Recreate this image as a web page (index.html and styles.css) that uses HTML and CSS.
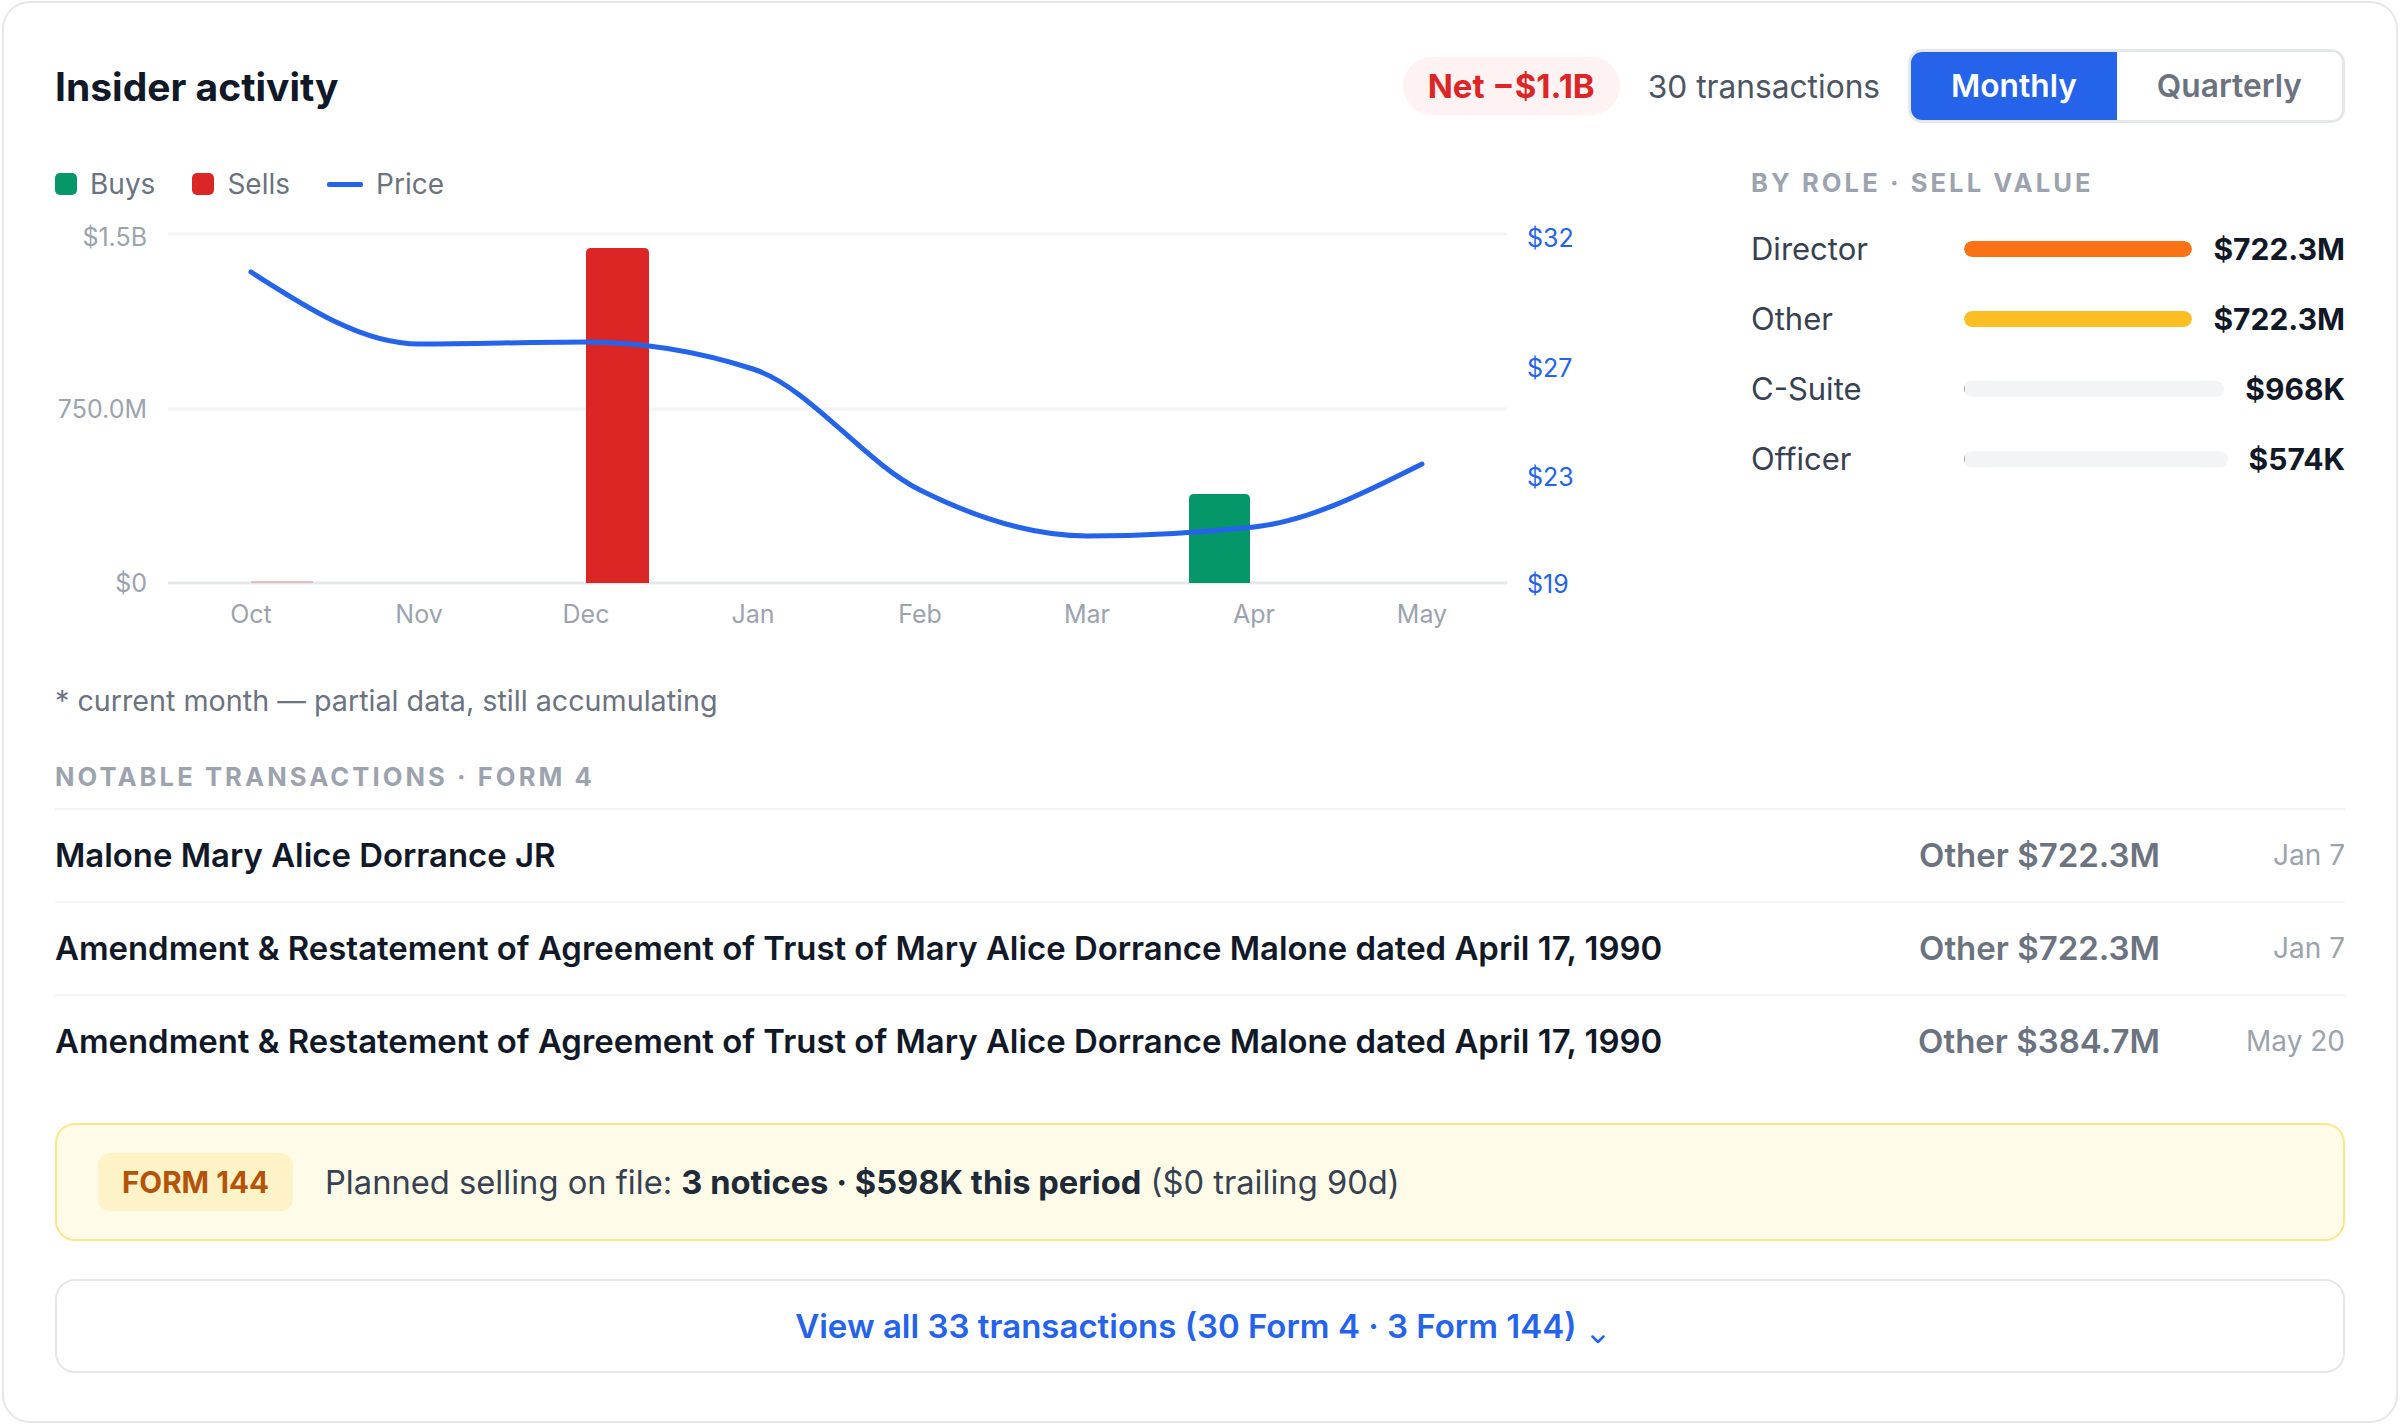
FILE: index.html
```html
<!DOCTYPE html>
<html lang="en">

<head>
    <meta charset="UTF-8" />
    <meta name="viewport" content="width=device-width, initial-scale=1.0" />
    <title>Insider activity</title>
    <link rel="stylesheet" href="styles.css">
</head>

<body>
    <main class="card">
        <header class="card-head">
            <h1>Insider activity</h1>
            <div class="head-meta">
                <span class="net-pill">Net −$1.1B</span>
                <span class="tx-count">30 transactions</span>
                <div class="toggle">
                    <button class="active">Monthly</button>
                    <button>Quarterly</button>
                </div>
            </div>
        </header>

        <section class="overview">
            <div class="chart-col">
                <ul class="legend">
                    <li><span class="swatch buy"></span>Buys</li>
                    <li><span class="swatch sell"></span>Sells</li>
                    <li><span class="swatch price"></span>Price</li>
                </ul>
                <svg class="chart" width="1540" height="430" viewBox="0 0 1540 430">
                    <line class="grid" x1="113" y1="24" x2="1452" y2="24" />
                    <line class="grid" x1="113" y1="199" x2="1452" y2="199" />
                    <line class="grid base" x1="113" y1="373" x2="1452" y2="373" />

                    <text class="axis" x="92" y="27" dy="0.35em" text-anchor="end">$1.5B</text>
                    <text class="axis" x="92" y="199" dy="0.35em" text-anchor="end">750.0M</text>
                    <text class="axis" x="92" y="373" dy="0.35em" text-anchor="end">$0</text>

                    <text class="axis-price" x="1472" y="28" dy="0.35em">$32</text>
                    <text class="axis-price" x="1472" y="158" dy="0.35em">$27</text>
                    <text class="axis-price" x="1472" y="267" dy="0.35em">$23</text>
                    <text class="axis-price" x="1472" y="374" dy="0.35em">$19</text>

                    <!-- buys sit left of the month tick, sells right of it -->
                    <rect class="bar-sell faint" x="196" y="371" width="62" height="2" />
                    <path class="bar-sell" d="M531 373 V43 Q531 38 536 38 H589 Q594 38 594 43 V373 Z" />
                    <path class="bar-buy" d="M1134 373 V289 Q1134 284 1139 284 H1190 Q1195 284 1195 289 V373 Z" />

                    <path class="price-line"
                        d="M196 62 C252 98 308 134 364 134 C420 134 475 132 531 132 C587 132 642 141 698 159 C754 177 809 252 865 280 C921 308 976 326 1032 326 C1088 326 1143 323 1199 317 C1255 311 1311 282 1367 254" />

                    <text class="axis" x="196" y="404" dy="0.35em" text-anchor="middle">Oct</text>
                    <text class="axis" x="364" y="404" dy="0.35em" text-anchor="middle">Nov</text>
                    <text class="axis" x="531" y="404" dy="0.35em" text-anchor="middle">Dec</text>
                    <text class="axis" x="698" y="404" dy="0.35em" text-anchor="middle">Jan</text>
                    <text class="axis" x="865" y="404" dy="0.35em" text-anchor="middle">Feb</text>
                    <text class="axis" x="1032" y="404" dy="0.35em" text-anchor="middle">Mar</text>
                    <text class="axis" x="1199" y="404" dy="0.35em" text-anchor="middle">Apr</text>
                    <text class="axis" x="1367" y="404" dy="0.35em" text-anchor="middle">May</text>
                </svg>
                <p class="footnote">* current month — partial data, still accumulating</p>
            </div>

            <aside class="roles">
                <h3 class="eyebrow">By role · Sell value</h3>
                <ul class="role-list">
                    <li>
                        <span class="role-name">Director</span>
                        <span class="role-track"><span class="role-fill director" style="width: 100%"></span></span>
                        <span class="role-value">$722.3M</span>
                    </li>
                    <li>
                        <span class="role-name">Other</span>
                        <span class="role-track"><span class="role-fill other" style="width: 100%"></span></span>
                        <span class="role-value">$722.3M</span>
                    </li>
                    <li>
                        <span class="role-name">C-Suite</span>
                        <span class="role-track"><span class="role-fill" style="width: 0.13%"></span></span>
                        <span class="role-value">$968K</span>
                    </li>
                    <li>
                        <span class="role-name">Officer</span>
                        <span class="role-track"><span class="role-fill" style="width: 0.08%"></span></span>
                        <span class="role-value">$574K</span>
                    </li>
                </ul>
            </aside>
        </section>

        <section class="notable">
            <h3 class="eyebrow">Notable transactions · Form 4</h3>
            <ul class="tx-list">
                <li class="tx-row">
                    <span class="tx-name">Malone Mary Alice Dorrance JR</span>
                    <span class="tx-value">Other $722.3M</span>
                    <span class="tx-date">Jan 7</span>
                </li>
                <li class="tx-row">
                    <span class="tx-name">Amendment &amp; Restatement of Agreement of Trust of Mary Alice Dorrance Malone dated April 17, 1990</span>
                    <span class="tx-value">Other $722.3M</span>
                    <span class="tx-date">Jan 7</span>
                </li>
                <li class="tx-row">
                    <span class="tx-name">Amendment &amp; Restatement of Agreement of Trust of Mary Alice Dorrance Malone dated April 17, 1990</span>
                    <span class="tx-value">Other $384.7M</span>
                    <span class="tx-date">May 20</span>
                </li>
            </ul>
        </section>

        <div class="form144">
            <span class="form-badge">FORM 144</span>
            <p>Planned selling on file: <strong>3 notices · $598K this period</strong> ($0 trailing 90d)</p>
        </div>

        <button class="view-all">View all 33 transactions (30 Form 4 · 3 Form 144)
            <svg class="chevron" width="14" height="9" viewBox="0 0 14 9">
                <path d="M1.5 1.5 L7 7 L12.5 1.5" />
            </svg>
        </button>
    </main>
</body>

</html>
```

FILE: styles.css
```css
* {
    margin: 0;
    padding: 0;
    box-sizing: border-box;
}

body {
    font-family: "Inter", "Liberation Sans", sans-serif;
    background: #ffffff;
    color: #111827;
    padding: 1px 2px 2px;
}

ul {
    list-style: none;
}

.card {
    background-color: #ffffff;
    border: 2px solid #e5e7eb;
    border-radius: 28px;
    padding: 46px 51px 48px;
}

/* header */

.card-head {
    display: flex;
    justify-content: space-between;
    align-items: center;
}

h1 {
    font-size: 39px;
    font-weight: 700;
    color: #111827;
}

.head-meta {
    display: flex;
    align-items: center;
    gap: 28px;
}

.net-pill {
    background-color: #fef2f2;
    color: #dc2626;
    font-size: 33px;
    font-weight: 700;
    line-height: 58px;
    padding: 0 25px;
    border-radius: 29px;
}

.tx-count {
    font-size: 31.7px;
    color: #4b5563;
}

.toggle {
    display: flex;
    border: 3px solid #e5e7eb;
    border-radius: 14px;
    overflow: hidden;
}

.toggle button {
    font-family: inherit;
    font-size: 31.7px;
    font-weight: 600;
    line-height: 68px;
    padding: 0 40px;
    border: none;
    background-color: #ffffff;
    color: #6b7280;
    cursor: pointer;
}

.toggle button.active {
    background-color: #2563eb;
    color: #ffffff;
}

/* chart + roles */

.overview {
    display: grid;
    grid-template-columns: 1fr 594px;
    column-gap: 100px;
    margin-top: 43px;
}

.legend {
    display: flex;
    gap: 37px;
    font-size: 28px;
    line-height: 36px;
    color: #6b7280;
}

.legend li {
    display: flex;
    align-items: center;
    gap: 13px;
}

.swatch {
    display: inline-block;
    width: 22px;
    height: 22px;
    border-radius: 5px;
}

.swatch.buy {
    background-color: #059669;
}

.swatch.sell {
    background-color: #dc2626;
}

.swatch.price {
    width: 36px;
    height: 5px;
    border-radius: 2px;
    background-color: #2563eb;
}

.chart {
    display: block;
    margin-top: 8px;
}

.chart .grid {
    stroke: #f3f4f6;
    stroke-width: 3;
}

.chart .grid.base {
    stroke: #e5e7eb;
}

.chart .axis {
    font-size: 25px;
    fill: #9ca3af;
}

.chart .axis-price {
    font-size: 25px;
    fill: #2563eb;
}

.chart .bar-sell {
    fill: #dc2626;
}

.chart .bar-sell.faint {
    opacity: 0.25;
}

.chart .bar-buy {
    fill: #059669;
}

.chart .price-line {
    fill: none;
    stroke: #2563eb;
    stroke-width: 5;
    stroke-linecap: round;
}

.footnote {
    margin-top: 41px;
    font-size: 28.7px;
    line-height: 40px;
    color: #6b7280;
}

.eyebrow {
    font-size: 25.6px;
    font-weight: 700;
    line-height: 34px;
    letter-spacing: 0.12em;
    text-transform: uppercase;
    color: #9ca3af;
}

.role-list {
    display: flex;
    flex-direction: column;
    gap: 30px;
    margin-top: 29px;
}

.role-list li {
    display: grid;
    grid-template-columns: 192px 1fr auto;
    column-gap: 21px;
    align-items: center;
    line-height: 40px;
}

.role-name {
    font-size: 31px;
    color: #374151;
}

.role-track {
    display: block;
    height: 16px;
    border-radius: 8px;
    background-color: #f3f4f6;
    overflow: hidden;
}

.role-fill {
    display: block;
    height: 100%;
    border-radius: 8px;
    background-color: #9ca3af;
}

.role-fill.director {
    background-color: #f97316;
}

.role-fill.other {
    background-color: #fbbf24;
}

.role-value {
    font-size: 30px;
    font-weight: 700;
    color: #111827;
}

/* notable transactions */

.notable {
    margin-top: 39px;
}

.tx-list {
    margin-top: 14px;
}

.tx-row {
    display: flex;
    align-items: center;
    border-top: 2px solid #f3f4f6;
    padding: 25px 0;
    line-height: 41px;
}

.tx-name {
    flex: 1;
    font-size: 32.9px;
    font-weight: 600;
    color: #111827;
}

.tx-value {
    font-size: 33px;
    font-weight: 600;
    color: #6b7280;
}

.tx-date {
    min-width: 140px;
    margin-left: 45px;
    text-align: right;
    font-size: 28px;
    color: #9ca3af;
}

/* form 144 + footer button */

.form144 {
    display: flex;
    align-items: center;
    gap: 32px;
    margin-top: 36px;
    padding: 28px 41px;
    background-color: #fefce8;
    border: 2px solid #fde68a;
    border-radius: 20px;
    font-size: 32.7px;
    color: #374151;
}

.form-badge {
    background-color: #fef3c7;
    color: #b45309;
    font-size: 29.6px;
    font-weight: 700;
    line-height: 40px;
    padding: 9px 24px;
    border-radius: 12px;
}

.form144 strong {
    font-weight: 700;
    color: #1f2937;
}

.view-all {
    display: block;
    width: 100%;
    margin-top: 38px;
    padding: 26px;
    background-color: #ffffff;
    border: 2px solid #e5e7eb;
    border-radius: 20px;
    font-family: inherit;
    font-size: 33px;
    font-weight: 600;
    line-height: 38px;
    color: #2563eb;
    text-align: center;
    cursor: pointer;
}

.chevron {
    margin-left: 6px;
    vertical-align: -6px;
}

.chevron path {
    fill: none;
    stroke: #2563eb;
    stroke-width: 2.5;
    stroke-linecap: round;
    stroke-linejoin: round;
}
```
